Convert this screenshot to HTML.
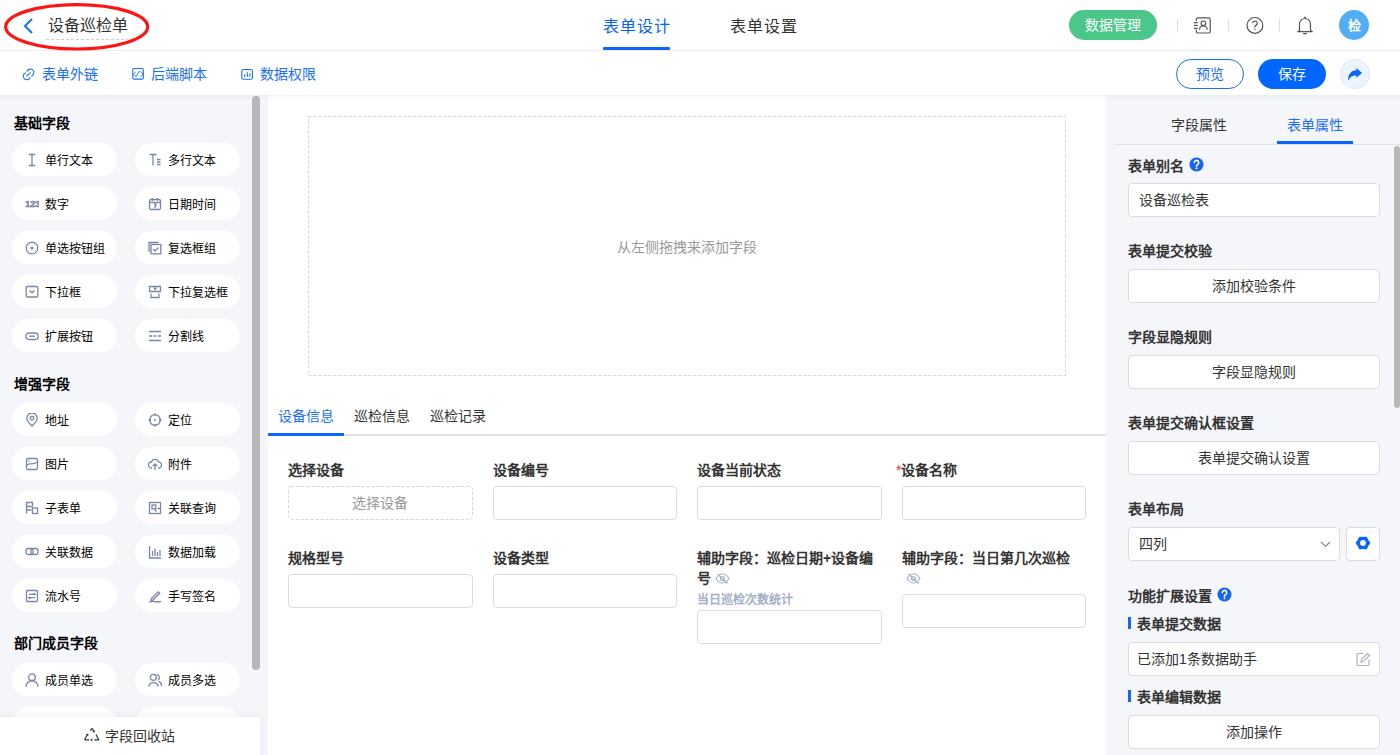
<!DOCTYPE html>
<html lang="zh-CN"><head><meta charset="utf-8">
<style>
*{box-sizing:border-box;margin:0;padding:0}
html,body{width:1400px;height:755px;overflow:hidden;background:#fff;font-family:"Liberation Sans",sans-serif;color:#333}
.abs{position:absolute}
.t{position:absolute;white-space:nowrap;line-height:1}
/* header */
#hdr{position:absolute;left:0;top:0;width:1400px;height:51px;background:#fff;border-bottom:1px solid #ebedf0}
#tb{position:absolute;left:0;top:51px;width:1400px;height:44px;background:#fff}
#left{position:absolute;left:0;top:95px;width:260px;height:660px;background:#f5f6fa}
#center{position:absolute;left:260px;top:95px;width:846px;height:660px;background:#fff}
#right{position:absolute;left:1106px;top:95px;width:294px;height:660px;background:#f5f6fa}
.shadow{position:absolute;left:0;top:95px;width:1400px;height:6px;background:linear-gradient(rgba(0,0,0,0.035),rgba(0,0,0,0))}
.pill{position:absolute;width:105px;height:33px;background:#fff;border-radius:17px}
.pill .lb{position:absolute;left:33px;top:12px;font-size:12px;line-height:13px;color:#000;white-space:nowrap}
.pill svg{position:absolute;left:13px;top:10px}
.sec{position:absolute;left:14px;font-size:14px;font-weight:bold;color:#000;line-height:14px}
.flb{position:absolute;font-size:14px;font-weight:bold;color:#333;line-height:14px;white-space:nowrap}
.inp{position:absolute;height:34px;border:1px solid #dcdcdc;border-radius:4px;background:#fff}
.rlb{position:absolute;left:22px;font-size:14px;font-weight:bold;color:#333;line-height:14px;white-space:nowrap}
.rbtn{position:absolute;left:22px;width:252px;height:34px;background:#fff;border:1px solid #dcdcdc;border-radius:4px;font-size:14px;color:#333;text-align:center;line-height:32px}
</style></head><body>

<div id="hdr">
  <svg class="abs" style="left:0;top:0" width="160" height="55">
    <ellipse cx="76.7" cy="26.8" rx="71" ry="22.2" fill="none" stroke="#ff1414" stroke-width="3.2"/>
  </svg>
  <svg class="abs" style="left:22px;top:17px" width="14" height="18"><path d="M10 2 L3 9 L10 16" fill="none" stroke="#1a6dff" stroke-width="2"/></svg>
  <div class="t" style="left:48px;top:18px;font-size:16px;color:#333">设备巡检单</div>
  <div class="abs" style="left:46px;top:39px;width:83px;border-top:1px dashed #d0d0d0"></div>

  <div class="t" style="left:603px;top:19px;font-size:16px;letter-spacing:1px;color:#0561ff">表单设计</div>
  <div class="abs" style="left:603px;top:47px;width:67px;height:3px;background:#0a64ff;border-radius:1px"></div>
  <div class="t" style="left:730px;top:19px;font-size:16px;letter-spacing:1px;color:#333">表单设置</div>

  <div class="abs" style="left:1069px;top:10px;width:88px;height:30px;border-radius:15px;background:#4cc78a;color:#fff;font-size:14px;line-height:30px;text-align:center">数据管理</div>
  <div class="abs" style="left:1177px;top:19px;width:1px;height:12px;background:#ddd"></div>
  <div class="abs" style="left:1228px;top:19px;width:1px;height:12px;background:#ddd"></div>
  <div class="abs" style="left:1279px;top:19px;width:1px;height:12px;background:#ddd"></div>

  <svg class="abs" style="left:1190px;top:14px" width="24" height="24" viewBox="0 0 24 24"><path d="M6.4 6.9V5.5A1.6 1.6 0 0 1 8 3.9h10.6a1.6 1.6 0 0 1 1.6 1.6v11.9a1.6 1.6 0 0 1-1.6 1.6H8a1.6 1.6 0 0 1-1.6-1.6v-1.6" fill="none" stroke="#555" stroke-width="1.2"/><path d="M3.9 8.6h3.8M3.9 11.4h3.8M3.9 14.3h3.8" fill="none" stroke="#555" stroke-width="1.2"/><circle cx="13.4" cy="9.3" r="2.3" fill="none" stroke="#555" stroke-width="1.2"/><path d="M9.5 15.8a3.9 3.9 0 0 1 7.8 0" fill="none" stroke="#555" stroke-width="1.2"/></svg>
  <svg class="abs" style="left:1245px;top:16px" width="20" height="20" viewBox="0 0 20 20"><circle cx="9.9" cy="9.4" r="7.9" fill="none" stroke="#555" stroke-width="1.2"/><path d="M7.6 7.3a2.3 2.3 0 1 1 3.3 2.1c-0.7 0.35-1 0.8-1 1.6v0.6" fill="none" stroke="#555" stroke-width="1.2"/><circle cx="9.9" cy="13.2" r="0.75" fill="#555"/></svg>
  <svg class="abs" style="left:1295px;top:15px" width="20" height="21" viewBox="0 0 20 21"><circle cx="10" cy="2.4" r="0.8" fill="#555"/><path d="M4.5 15.5V9a5.5 5.5 0 0 1 11 0v6.5l1.8 1.2H2.7z" fill="none" stroke="#555" stroke-width="1.2" stroke-linejoin="round"/><path d="M8.6 18.6h2.8" stroke="#555" stroke-width="1.2" stroke-linecap="round"/></svg>
  <div class="abs" style="left:1339px;top:10px;width:30px;height:30px;border-radius:15px;background:#52adf4;color:#fff;font-size:13px;font-weight:bold;line-height:32px;text-align:center">检</div>
</div>

<div id="tb">

  <svg class="abs" style="left:21px;top:15px" width="15" height="15" viewBox="0 0 15 15"><path transform="translate(7.55 8.4) scale(0.88) translate(-7.55 -7.9)" d="M5.9 4.4A4 4 0 1 1 11 9.6M9.2 11.4A4 4 0 1 1 4.1 6.2M5.4 9.7l4.3-3.6" fill="none" stroke="#1a6dff" stroke-width="1.2" stroke-linecap="round"/></svg>
  <svg class="abs" style="left:131px;top:16px" width="14" height="14" viewBox="0 0 14 14"><rect x="1.75" y="1.55" width="10.6" height="10.6" rx="1.5" fill="none" stroke="#1a6dff" stroke-width="1.1"/><path d="M4.75 5.05L2.4 7.28 5.12 9.69 8.27 4.12M8.83 4.12L12.1 7.28 9.39 9.69" fill="none" stroke="#1a6dff" stroke-width="0.9" stroke-linejoin="round"/></svg>
  <svg class="abs" style="left:240px;top:17px" width="14" height="13" viewBox="0 0 14 13"><rect x="1.75" y="1.45" width="10.7" height="9.8" rx="1.8" fill="none" stroke="#1a6dff" stroke-width="1.1"/><path d="M4.6 6.2v2.9M7.3 4.3v4.8M9.9 5.2v3.9" fill="none" stroke="#1a6dff" stroke-width="1.05"/></svg>
  <div class="t" style="left:42px;top:16px;font-size:14px;color:#1a6dff">表单外链</div>
  <div class="t" style="left:151px;top:16px;font-size:14px;color:#1a6dff">后端脚本</div>
  <div class="t" style="left:260px;top:16px;font-size:14px;color:#1a6dff">数据权限</div>
  <div class="abs" style="left:1176px;top:8px;width:68px;height:30px;border:1px solid #1a6dff;border-radius:15px;color:#1a6dff;font-size:14px;line-height:28px;text-align:center">预览</div>
  <div class="abs" style="left:1258px;top:8px;width:68px;height:30px;background:#0066ff;border-radius:15px;color:#fff;font-size:14px;font-weight:500;line-height:31px;text-align:center">保存</div>
  <div class="abs" style="left:1340px;top:8px;width:30px;height:30px;border:1px solid #dbe6ff;background:#eef4ff;border-radius:15px"><svg class="abs" style="left:6px;top:7px" width="16" height="14" viewBox="0 0 16 14"><path d="M1.2 13C1.1 7.5 4 3.4 9.3 3.2V1L15.1 5.9 9.3 10.8V8.4C5.2 8.2 2.6 10 1.7 13z" fill="#0a64ff"/></svg></div>
</div>

<div id="left">
<div class="sec" style="top:21px">基础字段</div>
<div class="pill" style="left:12px;top:48px"><svg width="14" height="14" viewBox="0 0 14 14"><path d="M4 1.5h6M4 12.5h6M7 1.5v11" fill="none" stroke="#7a86a3" stroke-width="1.3"/></svg><span class="lb">单行文本</span></div>
<div class="pill" style="left:135px;top:48px"><svg width="14" height="14" viewBox="0 0 14 14"><path d="M1.5 1.5h7M5 1.5v11M9 6.5h3.5M9 9h3.5M9 11.5h3.5" fill="none" stroke="#7a86a3" stroke-width="1.3"/></svg><span class="lb">多行文本</span></div>
<div class="pill" style="left:12px;top:92px"><svg width="14" height="14" viewBox="0 0 14 14"><text x="0" y="10.3" font-family="Liberation Sans" font-size="9.6" font-weight="bold" fill="#7a86a3" stroke="#7a86a3" stroke-width="0.4" letter-spacing="-0.3">123</text></svg><span class="lb">数字</span></div>
<div class="pill" style="left:135px;top:92px"><svg width="14" height="14" viewBox="0 0 14 14"><rect x="1.5" y="2.5" width="11" height="10" rx="1.5" fill="none" stroke="#7a86a3" stroke-width="1.3"/><path d="M1.5 5.5h11M4.5 1v3M9.5 1v3M6 7.5h2l-1.2 3.5" fill="none" stroke="#7a86a3" stroke-width="1.3"/></svg><span class="lb">日期时间</span></div>
<div class="pill" style="left:12px;top:136px"><svg width="14" height="14" viewBox="0 0 14 14"><circle cx="7" cy="7" r="5.8" fill="none" stroke="#7a86a3" stroke-width="1.3"/><circle cx="7" cy="7" r="1.5" fill="#7a86a3"/></svg><span class="lb">单选按钮组</span></div>
<div class="pill" style="left:135px;top:136px"><svg width="14" height="14" viewBox="0 0 14 14"><path d="M1 11V1.5h9.5" fill="none" stroke="#7a86a3" stroke-width="1.3"/><rect x="3" y="3.5" width="9.8" height="9.3" fill="none" stroke="#7a86a3" stroke-width="1.3"/><path d="M5 8l2 2 3.5-3.5" fill="none" stroke="#7a86a3" stroke-width="1.3"/></svg><span class="lb">复选框组</span></div>
<div class="pill" style="left:12px;top:180px"><svg width="14" height="14" viewBox="0 0 14 14"><rect x="1.2" y="1.5" width="11.6" height="10.5" rx="1" fill="none" stroke="#7a86a3" stroke-width="1.3"/><path d="M4.5 5.5l2.5 2.3 2.5-2.3" fill="none" stroke="#7a86a3" stroke-width="1.3"/></svg><span class="lb">下拉框</span></div>
<div class="pill" style="left:135px;top:180px"><svg width="14" height="14" viewBox="0 0 14 14"><path d="M1.5 6.5V1.5h11v5z M3 8.5v4h8v-4" fill="none" stroke="#7a86a3" stroke-width="1.3"/><path d="M6 2.5l1 2 1.5-2" fill="none" stroke="#7a86a3" stroke-width="1.3"/></svg><span class="lb">下拉复选框</span></div>
<div class="pill" style="left:12px;top:224px"><svg width="14" height="14" viewBox="0 0 14 14"><rect x="0.8" y="4" width="12.4" height="6.5" rx="3.2" fill="none" stroke="#7a86a3" stroke-width="1.3"/><path d="M4 7.2h6" fill="none" stroke="#7a86a3" stroke-width="1.3"/></svg><span class="lb">扩展按钮</span></div>
<div class="pill" style="left:135px;top:224px"><svg width="14" height="14" viewBox="0 0 14 14"><path d="M1 2.5h12M1 11.5h12" fill="none" stroke="#7a86a3" stroke-width="1.3"/><path d="M1 7h12" stroke="#7a86a3" stroke-width="1.3" stroke-dasharray="3 1.5"/></svg><span class="lb">分割线</span></div>
<div class="sec" style="top:282px">增强字段</div>
<div class="pill" style="left:12px;top:308px"><svg width="14" height="14" viewBox="0 0 14 14"><path d="M7 13C4.5 10.5 1.8 8 1.8 5.2A5.2 5.2 0 0 1 12.2 5.2C12.2 8 9.5 10.5 7 13z" fill="none" stroke="#7a86a3" stroke-width="1.3"/><circle cx="7" cy="5.3" r="1.8" fill="none" stroke="#7a86a3" stroke-width="1.3"/></svg><span class="lb">地址</span></div>
<div class="pill" style="left:135px;top:308px"><svg width="14" height="14" viewBox="0 0 14 14"><circle cx="7" cy="7" r="5.3" fill="none" stroke="#7a86a3" stroke-width="1.3"/><circle cx="7" cy="7" r="1" fill="#7a86a3"/><path d="M7 0.5v2.5M7 11v2.5M0.5 7h2.5M11 7h2.5" fill="none" stroke="#7a86a3" stroke-width="1.3"/></svg><span class="lb">定位</span></div>
<div class="pill" style="left:12px;top:352px"><svg width="14" height="14" viewBox="0 0 14 14"><rect x="1.5" y="1.5" width="11" height="11" rx="1.5" fill="none" stroke="#7a86a3" stroke-width="1.3"/><path d="M1.5 8.5C4 5 6 9 12.5 5" fill="none" stroke="#7a86a3" stroke-width="1.3"/><circle cx="4" cy="4.3" r="0.8" fill="#7a86a3"/></svg><span class="lb">图片</span></div>
<div class="pill" style="left:135px;top:352px"><svg width="14" height="14" viewBox="0 0 14 14"><path d="M4 11H3.5A3 3 0 0 1 3.5 5 A3.8 3.8 0 0 1 10.8 5.2 A2.9 2.9 0 0 1 10.5 11H10" fill="none" stroke="#7a86a3" stroke-width="1.3"/><path d="M7 13V7M4.8 9L7 6.8 9.2 9" fill="none" stroke="#7a86a3" stroke-width="1.3"/></svg><span class="lb">附件</span></div>
<div class="pill" style="left:12px;top:396px"><svg width="14" height="14" viewBox="0 0 14 14"><path d="M1.5 12.5V1.5h6v4M1.5 5.5h6M1.5 9h5" fill="none" stroke="#7a86a3" stroke-width="1.3"/><rect x="7.5" y="7" width="5" height="5.5" fill="none" stroke="#7a86a3" stroke-width="1.3"/></svg><span class="lb">子表单</span></div>
<div class="pill" style="left:135px;top:396px"><svg width="14" height="14" viewBox="0 0 14 14"><rect x="1.5" y="1.5" width="11" height="11" fill="none" stroke="#7a86a3" stroke-width="1.3"/><rect x="4" y="4" width="3.8" height="3.8" fill="none" stroke="#7a86a3" stroke-width="1.3"/><path d="M6.5 8.5l2 2M9.5 7.5h3M7 12.5" fill="none" stroke="#7a86a3" stroke-width="1.3"/></svg><span class="lb">关联查询</span></div>
<div class="pill" style="left:12px;top:440px"><svg width="14" height="14" viewBox="0 0 14 14"><rect x="1" y="3.5" width="7" height="6" rx="2" fill="none" stroke="#7a86a3" stroke-width="1.3"/><rect x="6" y="3.5" width="7" height="6" rx="2" fill="none" stroke="#7a86a3" stroke-width="1.3"/></svg><span class="lb">关联数据</span></div>
<div class="pill" style="left:135px;top:440px"><svg width="14" height="14" viewBox="0 0 14 14"><path d="M1.5 1v12h11.5M4.5 6v5M7 3.5v7.5M9.5 7v4M12 5v6" fill="none" stroke="#7a86a3" stroke-width="1.3"/></svg><span class="lb">数据加载</span></div>
<div class="pill" style="left:12px;top:484px"><svg width="14" height="14" viewBox="0 0 14 14"><rect x="1.5" y="1.5" width="11" height="11" rx="1" fill="none" stroke="#7a86a3" stroke-width="1.3"/><path d="M4 5.3h6l-1.5-1.3M10 8.7H4l1.5 1.3" fill="none" stroke="#7a86a3" stroke-width="1.3"/></svg><span class="lb">流水号</span></div>
<div class="pill" style="left:135px;top:484px"><svg width="14" height="14" viewBox="0 0 14 14"><path d="M3 10L10.2 2.8l1.5 1.5L4.5 11.5H3z" fill="none" stroke="#7a86a3" stroke-width="1.3"/><path d="M1 13c4-1.5 6 0.5 12-0.5" fill="none" stroke="#7a86a3" stroke-width="1.3"/></svg><span class="lb">手写签名</span></div>
<div class="sec" style="top:541px">部门成员字段</div>
<div class="pill" style="left:12px;top:568px"><svg width="14" height="14" viewBox="0 0 14 14"><circle cx="7" cy="4.2" r="3.3" fill="none" stroke="#7a86a3" stroke-width="1.3"/><path d="M1 13.8a6 6 0 0 1 12 0" fill="none" stroke="#7a86a3" stroke-width="1.3"/></svg><span class="lb">成员单选</span></div>
<div class="pill" style="left:135px;top:568px"><svg width="14" height="14" viewBox="0 0 14 14"><circle cx="5.3" cy="4.3" r="3" fill="none" stroke="#7a86a3" stroke-width="1.3"/><path d="M0.6 13.5a4.9 4.9 0 0 1 9.6 0M8.6 1.6a3 3 0 0 1 1.2 5.6M10.8 8.3a5 5 0 0 1 2.8 5" fill="none" stroke="#7a86a3" stroke-width="1.3"/></svg><span class="lb">成员多选</span></div>
<div class="pill" style="left:12px;top:612px"><svg width="14" height="14" viewBox="0 0 14 14"><circle cx="7" cy="4.2" r="3.3" fill="none" stroke="#7a86a3" stroke-width="1.3"/><path d="M1 13.8a6 6 0 0 1 12 0" fill="none" stroke="#7a86a3" stroke-width="1.3"/></svg><span class="lb"></span></div>
<div class="pill" style="left:135px;top:612px"><svg width="14" height="14" viewBox="0 0 14 14"><circle cx="5.3" cy="4.3" r="3" fill="none" stroke="#7a86a3" stroke-width="1.3"/><path d="M0.6 13.5a4.9 4.9 0 0 1 9.6 0M8.6 1.6a3 3 0 0 1 1.2 5.6M10.8 8.3a5 5 0 0 1 2.8 5" fill="none" stroke="#7a86a3" stroke-width="1.3"/></svg><span class="lb"></span></div>
  <div class="abs" style="left:252px;top:1px;width:8px;height:574px;border-radius:4px;background:#b8b8b8"></div>
  <div class="abs" style="left:0;top:622px;width:260px;height:38px;background:#fff;box-shadow:0 0 10px rgba(0,0,0,0.07);z-index:5"></div>
  <svg class="abs" style="left:84px;top:633px;z-index:6" width="16" height="15" viewBox="0 0 16 15"><path d="M6.3 2.6L7.5 0.9Q8 0.3 8.5 0.9L10 3.5M12 6.6l2.7 4.9Q15 11.7 14.3 11.8H10.3M5.3 11.8H1.3Q0.6 11.7 0.9 11l2.3-4.1" fill="none" stroke="#333" stroke-width="1.15"/><path d="M10.6 1.9l0 2.6-2.5-0.4z M8.3 10.2l-2 1.6 2 1.6z M1.8 6.4l2.3-0.8 0.4 2.5z" fill="#333"/></svg>
  <div class="t" style="left:105px;top:634px;font-size:14px;color:#333;z-index:6">字段回收站</div>
</div>
<div id="center">
  <div class="abs" style="left:0;top:0;width:8px;height:660px;background:#f5f6fa"></div>
  <svg class="abs" style="left:48px;top:21px" width="758" height="260"><rect x="0.5" y="0.5" width="757" height="259" fill="none" stroke="#d4d4d4" stroke-width="1" stroke-dasharray="3 2"/></svg>
  <div class="t" style="left:357px;top:145px;font-size:14px;color:#999">从左侧拖拽来添加字段</div>

  <div class="abs" style="left:8px;top:339px;width:838px;height:2px;background:#e2e2e2"></div>
  <div class="abs" style="left:8px;top:338px;width:76px;height:3px;background:#0a64ff"></div>
  <div class="t" style="left:18px;top:314px;font-size:14px;color:#1a6dff">设备信息</div>
  <div class="t" style="left:94px;top:314px;font-size:14px;color:#333">巡检信息</div>
  <div class="t" style="left:170px;top:314px;font-size:14px;color:#333">巡检记录</div>

  <div class="flb" style="left:28px;top:368px">选择设备</div>
  <svg class="abs" style="left:28px;top:391px" width="185" height="34"><rect x="0.5" y="0.5" width="184" height="33" rx="3" fill="none" stroke="#d4d4d4" stroke-width="1" stroke-dasharray="3 2"/></svg>
  <div class="t" style="left:92px;top:401px;font-size:14px;color:#999">选择设备</div>
  <div class="flb" style="left:233px;top:368px">设备编号</div>
  <div class="inp" style="left:233px;top:391px;width:184px"></div>
  <div class="flb" style="left:437px;top:368px">设备当前状态</div>
  <div class="inp" style="left:437px;top:391px;width:185px"></div>
  <div class="flb" style="left:636px;top:368px"><span style="color:#e33;font-weight:normal">*</span>设备名称</div>
  <div class="inp" style="left:642px;top:391px;width:184px"></div>

  <div class="flb" style="left:28px;top:456px">规格型号</div>
  <div class="inp" style="left:28px;top:479px;width:185px"></div>
  <div class="flb" style="left:233px;top:456px">设备类型</div>
  <div class="inp" style="left:233px;top:479px;width:184px"></div>
  <div class="flb" style="left:437px;top:456px;line-height:20px;top:453px;width:185px;white-space:normal">辅助字段：巡检日期+设备编号<span style="display:inline-block;vertical-align:-1px;margin-left:4px"><svg width="15" height="11" viewBox="0 0 15 11"><path d="M1 5.5C3 2 5 1 7.5 1S12 2 14 5.5C12 9 10 10 7.5 10S3 9 1 5.5z" fill="none" stroke="#a9b2c6" stroke-width="1.1"/><circle cx="7.5" cy="5.5" r="2" fill="none" stroke="#a9b2c6" stroke-width="1.1"/><path d="M2.5 1l10 9.5" stroke="#a9b2c6" stroke-width="1.1"/></svg></span></div>
  <div class="t" style="left:437px;top:499px;font-size:12px;font-weight:bold;color:#a3aec7">当日巡检次数统计</div>
  <div class="inp" style="left:437px;top:515px;width:185px"></div>
  <div class="flb" style="left:642px;top:453px;line-height:20px;width:184px;white-space:normal">辅助字段：当日第几次巡检<span style="display:inline-block;vertical-align:-1px;margin-left:4px"><svg width="15" height="11" viewBox="0 0 15 11"><path d="M1 5.5C3 2 5 1 7.5 1S12 2 14 5.5C12 9 10 10 7.5 10S3 9 1 5.5z" fill="none" stroke="#a9b2c6" stroke-width="1.1"/><circle cx="7.5" cy="5.5" r="2" fill="none" stroke="#a9b2c6" stroke-width="1.1"/><path d="M2.5 1l10 9.5" stroke="#a9b2c6" stroke-width="1.1"/></svg></span></div>
  <div class="inp" style="left:642px;top:499px;width:184px"></div>
</div>
<div id="right">
  <div class="t" style="left:65px;top:23px;font-size:14px;color:#333">字段属性</div>
  <div class="t" style="left:181px;top:23px;font-size:14px;color:#1a6dff">表单属性</div>
  <div class="abs" style="left:8px;top:49px;width:286px;height:1px;background:#dfe1e6"></div>
  <div class="abs" style="left:171px;top:46px;width:76px;height:3px;background:#0a64ff"></div>
  <div class="abs" style="left:288px;top:51px;width:6px;height:262px;border-radius:3px;background:#b8b8b8"></div>

  <div class="rlb" style="top:62px">表单别名<span style="display:inline-block;vertical-align:-1px;margin-left:5px"><svg width="15" height="15" viewBox="0 0 15 15"><circle cx="7.5" cy="7.5" r="7" fill="#1565f5"/><path d="M5.3 5.6a2.2 2.2 0 1 1 3.2 2c-0.7 0.4-1 0.7-1 1.5v0.5" fill="none" stroke="#fff" stroke-width="1.6" stroke-linecap="round"/><circle cx="7.5" cy="11.4" r="0.95" fill="#fff"/></svg></span></div>
  <div class="inp" style="left:22px;top:88px;width:252px;font-size:14px;line-height:32px;padding-left:10px;color:#333">设备巡检表</div>

  <div class="rlb" style="top:149px">表单提交校验</div>
  <div class="rbtn" style="top:174px">添加校验条件</div>
  <div class="rlb" style="top:235px">字段显隐规则</div>
  <div class="rbtn" style="top:260px">字段显隐规则</div>
  <div class="rlb" style="top:321px">表单提交确认框设置</div>
  <div class="rbtn" style="top:346px">表单提交确认设置</div>
  <div class="rlb" style="top:407px">表单布局</div>
  <div class="inp" style="left:22px;top:432px;width:212px;font-size:14px;line-height:32px;padding-left:10px;color:#333">四列
    <svg class="abs" style="left:191px;top:13px" width="11" height="7" viewBox="0 0 11 7"><path d="M1 1l4.5 4.5L10 1" fill="none" stroke="#888" stroke-width="1.2"/></svg>
  </div>
  <div class="inp" style="left:240px;top:432px;width:34px">
    <svg class="abs" style="left:8px;top:7px" width="16" height="16" viewBox="0 0 16 16"><polygon points="14.20,8.00 11.10,13.37 4.90,13.37 1.80,8.00 4.90,2.63 11.10,2.63" fill="#0a64ff" stroke="#0a64ff" stroke-width="2" stroke-linejoin="round"/><circle cx="14.06" cy="11.50" r="1.1" fill="#fff"/><circle cx="8.00" cy="15.00" r="1.1" fill="#fff"/><circle cx="1.94" cy="11.50" r="1.1" fill="#fff"/><circle cx="1.94" cy="4.50" r="1.1" fill="#fff"/><circle cx="8.00" cy="1.00" r="1.1" fill="#fff"/><circle cx="14.06" cy="4.50" r="1.1" fill="#fff"/><circle cx="8" cy="8" r="2.9" fill="#fff"/></svg>
  </div>
  <div class="rlb" style="top:492px">功能扩展设置<span style="display:inline-block;vertical-align:-1px;margin-left:5px"><svg width="15" height="15" viewBox="0 0 15 15"><circle cx="7.5" cy="7.5" r="7" fill="#1565f5"/><path d="M5.3 5.6a2.2 2.2 0 1 1 3.2 2c-0.7 0.4-1 0.7-1 1.5v0.5" fill="none" stroke="#fff" stroke-width="1.6" stroke-linecap="round"/><circle cx="7.5" cy="11.4" r="0.95" fill="#fff"/></svg></span></div>
  <div class="abs" style="left:22px;top:522px;width:3px;height:12px;background:#1565f5"></div>
  <div class="rlb" style="top:522px;left:31px">表单提交数据</div>
  <div class="inp" style="left:22px;top:547px;width:252px;font-size:14px;line-height:32px;padding-left:8px;color:#333">已添加1条数据助手
    <svg class="abs" style="left:227px;top:9px" width="15" height="15" viewBox="0 0 15 15"><path d="M13 7.5v5a1 1 0 0 1-1 1H2a1 1 0 0 1-1-1V2.5a1 1 0 0 1 1-1h5.5" fill="none" stroke="#a9b2c6" stroke-width="1.2"/><path d="M5 10l0.5-2.5 6-6 2 2-6 6z" fill="none" stroke="#a9b2c6" stroke-width="1.2"/></svg>
  </div>
  <div class="abs" style="left:22px;top:595px;width:3px;height:12px;background:#1565f5"></div>
  <div class="rlb" style="top:595px;left:31px">表单编辑数据</div>
  <div class="rbtn" style="top:620px">添加操作</div>
</div>
<div class="shadow"></div>
</body></html>
